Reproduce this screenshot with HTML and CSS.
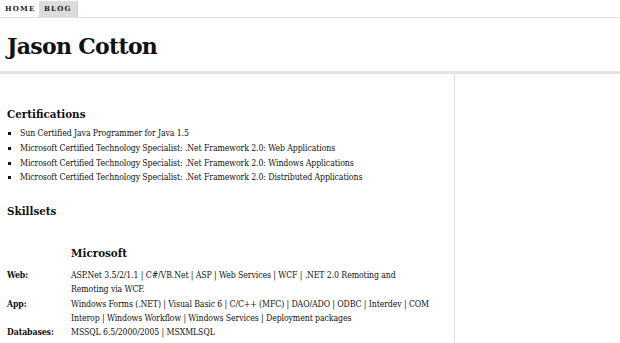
FILE: index.html
```html
<!DOCTYPE html>
<html>
<head>
<meta charset="utf-8">
<title>Jason Cotton</title>
<link rel="stylesheet" href="styles.css">
</head>
<body>
<nav class="tabs">
  <a class="tab tab-active" href="#">HOME</a>
  <a class="tab" href="#">BLOG</a>
</nav>
<header class="masthead">
  <h1 class="site-title">Jason Cotton</h1>
</header>
<div class="layout">
  <main class="content">
    <h2 class="section-title">Certifications</h2>
    <ul class="cert-list">
      <li>Sun Certified Java Programmer for Java 1.5</li>
      <li>Microsoft Certified Technology Specialist: .Net Framework 2.0: Web Applications</li>
      <li>Microsoft Certified Technology Specialist: .Net Framework 2.0: Windows Applications</li>
      <li>Microsoft Certified Technology Specialist: .Net Framework 2.0: Distributed Applications</li>
    </ul>
    <h2 class="section-title skills-title">Skillsets</h2>
    <div class="skills">
      <div></div>
      <h3 class="skill-group">Microsoft</h3>
      <div class="skill-label">Web:</div>
      <div class="skill-value">ASP.Net 3.5/2/1.1 | C#/VB.Net | ASP | Web Services | WCF | .NET 2.0 Remoting and Remoting via WCF.</div>
      <div class="skill-label">App:</div>
      <div class="skill-value">Windows Forms (.NET) | Visual Basic 6 | C/C++ (MFC) | DAO/ADO | ODBC | Interdev | COM Interop | Windows Workflow | Windows Services | Deployment packages</div>
      <div class="skill-label">Databases:</div>
      <div class="skill-value">MSSQL 6.5/2000/2005 | MSXMLSQL</div>
      <div class="skill-label">Other tools:</div>
      <div class="skill-value">Visual Studio 2008/2005/2003 | Visual SourceSafe | Team Foundation Server</div>
    </div>
  </main>
  <aside class="sidebar"></aside>
</div>
</body>
</html>
```

FILE: styles.css
```css
html, body {
  margin: 0;
  padding: 0;
  background: #fff;
  color: #111;
  font-family: "DejaVu Serif Condensed", "DejaVu Serif", Georgia, serif;
}
body {
  overflow: hidden;
  height: 343px;
}
.tabs {
  display: flex;
  height: 17px;
  border-bottom: 1px solid #e2e2e2;
}
.tab {
  display: block;
  height: 16px;
  margin-top: 1px;
  padding: 0 5px;
  font-family: "DejaVu Serif", Georgia, serif;
  font-size: 7px;
  line-height: 16px;
  font-weight: bold;
  letter-spacing: 1.2px;
  color: #222;
  text-decoration: none;
  background: #dcdcdc;
  border-right: 1px solid #cfcfcf;
}
.tab-active {
  background: #fff;
  width: 29px;
  border-right: none;
}
.masthead {
  height: 53px;
  border-bottom: 3px solid #e4e4e4;
}
.site-title {
  margin: 0;
  padding: 15px 0 0 7px;
  font-family: "DejaVu Serif", Georgia, serif;
  font-size: 22px;
  line-height: 26px;
  font-weight: bold;
  letter-spacing: -0.7px;
}
.layout {
  display: flex;
  height: 400px;
}
.content {
  width: 447px;
  padding: 32px 0 0 7px;
  border-right: 1px solid #dedede;
}
.sidebar {
  flex: 1;
}
.section-title {
  margin: 0;
  font-size: 11.5px;
  line-height: 16px;
  font-weight: bold;
}
.cert-list {
  margin: 4px 0 0 0;
  padding: 0 0 0 13px;
  list-style: square;
  font-size: 8.7px;
  line-height: 14.8px;
  letter-spacing: -0.1px;
}
.skills-title {
  margin-top: 18px;
}
.skills {
  display: grid;
  grid-template-columns: 64px 362px;
  margin-top: 25px;
  font-size: 8.7px;
  line-height: 14.3px;
  letter-spacing: -0.1px;
}
.skill-group {
  margin: 0 0 6px 0;
  font-size: 11.5px;
  line-height: 18px;
  font-weight: bold;
  letter-spacing: 0;
}
.skill-label {
  font-weight: bold;
}
```
